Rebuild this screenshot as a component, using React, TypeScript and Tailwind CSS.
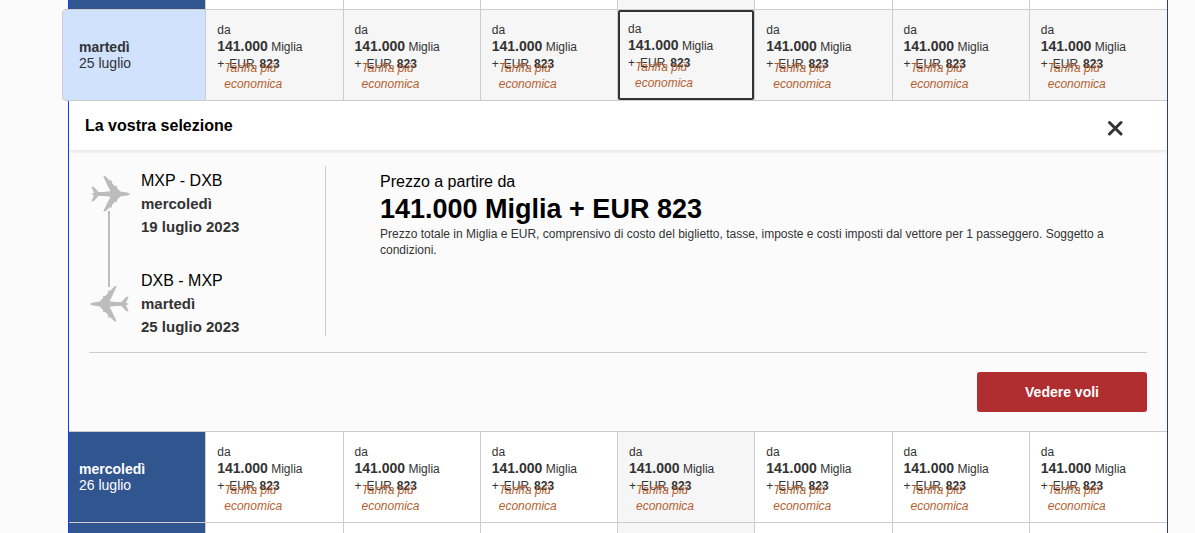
import { useState } from 'react';
import clsx from 'clsx';

interface Leg {
    route: string;
    weekday: string;
    date: string;
}

const columns = [0, 1, 2, 3, 4, 5, 6];
const activeColumn = 3;

const legs: Leg[] = [
    { route: 'MXP - DXB', weekday: 'mercoledì', date: '19 luglio 2023' },
    { route: 'DXB - MXP', weekday: 'martedì', date: '25 luglio 2023' },
];

function Plane({ className }: { className?: string }) {
    return (
        <svg viewBox="1 0 40 40" className={clsx('h-10 w-10 fill-[#bcbcbc]', className)} aria-hidden="true">
            <path d="M2.3 12.5 L5 13 L9.5 18 L15 18 L21.5 17.2 L18.5 11.5 L14.2 2 L16.5 2.2 L20.5 6.6 L22.8 6.6 L23 9 L25.6 12 L27.8 11.8 L28 14.2 L31.4 17.6 L38 18.4 Q40.6 19 41 20 Q40.6 21 38 21.6 L31.4 22.4 L28 25.8 L27.8 28.2 L25.6 28 L23 31 L22.8 33.4 L20.5 33.4 L16.5 37.3 L14.2 37.6 L18.5 28.5 L21.5 22.8 L15 22 L9.5 22 L5 27 L2.3 27.5 L5 21 L2.8 20.4 L2.8 19.6 L5 19 Z" />
        </svg>
    );
}

function Fare({ selected = false }: { selected?: boolean }) {
    return (
        <button
            type="button"
            aria-pressed={selected}
            className={clsx(
                'flex h-[90px] w-full flex-col text-left text-xs leading-4 text-[#333]',
                selected ? 'rounded-xs border-2 border-[#333] px-2 pt-[9px]' : 'px-[11px] pt-3'
            )}
        >
            <span className="block">da</span>
            <span className="block leading-[17px]">
                <b className="text-sm leading-[17px]">141.000</b> Miglia
            </span>
            <span className="flex gap-[5px]">
                <span>+</span>
                <span>EUR</span>
                <b>823</b>
            </span>
            <i className="-mt-3 block w-20 pl-[7px] text-[#b55f2f]">Tariffa più economica</i>
        </button>
    );
}

function FareRow({ weekday, date }: { weekday: string; date: string }) {
    return (
        <tr>
            <th scope="row" className="border-r border-b border-[#ccc] bg-[#31558f] pl-[10px] text-left text-sm leading-4 font-normal text-white">
                <b className="block">{weekday}</b>
                {date}
            </th>
            {columns.map((col) => (
                <td
                    key={col}
                    className={clsx('border-b border-[#ccc] p-0 not-last:border-r', col === activeColumn ? 'bg-[#f6f6f6]' : 'bg-white')}
                >
                    <Fare />
                </td>
            ))}
        </tr>
    );
}

function CutRow({ last = false }: { last?: boolean }) {
    return (
        <tr className={last ? 'h-[10px]' : 'h-[10px] *:border-b'}>
            <td className="border-r border-[#ccc] bg-[#31558f] p-0" />
            {columns.map((col) => (
                <td
                    key={col}
                    className={clsx('border-[#ccc] p-0 not-last:border-r', col === activeColumn ? 'bg-[#f6f6f6]' : 'bg-white')}
                />
            ))}
        </tr>
    );
}

function Selection({ onClose }: { onClose: () => void }) {
    return (
        <section className="overflow-hidden bg-[#fbfbfb]">
            <header className="flex h-[49px] items-center justify-between bg-white pr-11 pl-4 shadow-[0_2px_3px_#e9e9e9]">
                <h2 className="text-base font-bold text-black">La vostra selezione</h2>
                <button type="button" aria-label="Chiudi" onClick={onClose} className="mt-1">
                    <svg viewBox="0 0 16 16" className="h-4 w-4 stroke-[#333] stroke-3" strokeLinecap="round">
                        <path d="M2.5 2.5 L14 14 M14 2.5 L2.5 14" />
                    </svg>
                </button>
            </header>
            <div className="mx-5 flex border-b border-[#ccc] py-4">
                <div className="flex h-[170px] w-[237px] shrink-0 border-r border-[#ccc]">
                    <div className="flex w-[52px] flex-col pt-2 pb-3 pl-px">
                        <Plane />
                        <div className="-my-[3px] ml-[18px] w-[2px] flex-1 bg-[#bcbcbc]" />
                        <Plane className="-scale-x-100" />
                    </div>
                    <div className="flex flex-col gap-[31px] pt-[3px]">
                        {legs.map((leg) => (
                            <div key={leg.route} className="text-[15px] leading-[23px] font-bold text-[#333]">
                                <div className="text-base leading-[23px] font-normal text-black">{leg.route}</div>
                                <div>{leg.weekday}</div>
                                <div>{leg.date}</div>
                            </div>
                        ))}
                    </div>
                </div>
                <div className="pt-1 pl-[54px]">
                    <p className="text-base leading-6 text-black">Prezzo a partire da</p>
                    <p className="mb-0.5 text-[27px] leading-[30px] font-bold text-black">141.000 Miglia + EUR 823</p>
                    <p className="text-xs leading-4 text-[#333]">
                        Prezzo totale in Miglia e EUR, comprensivo di costo del biglietto, tasse, imposte e costi imposti dal vettore per 1 passeggero. Soggetto a condizioni.
                    </p>
                </div>
            </div>
            <div className="flex justify-end px-5 py-[19px]">
                <button type="button" className="h-10 w-[170px] rounded-[3px] bg-[#b02e30] text-sm font-bold text-white">
                    Vedere voli
                </button>
            </div>
        </section>
    );
}

export default function App() {
    const [open, setOpen] = useState(true);

    return (
        <main className="min-h-screen bg-[#fbfbfb] pr-[27px] pl-[68px] font-['Liberation_Sans',Arial,sans-serif]">
            <div className="border-r border-l border-r-[#1f37c4] border-l-[#1538f5]">
                <table className="w-full table-fixed border-separate border-spacing-0">
                    <tbody>
                        <CutRow />
                        <tr>
                            <th scope="row" className="p-0 text-left text-sm leading-4 font-normal text-[#333]">
                                <div className="-mt-px -ml-[7px] flex h-[92px] flex-col justify-center rounded-l-sm border border-[#ccc] bg-[#d0e2fe] pl-[16px]">
                                    <b>martedì</b>
                                    25 luglio
                                </div>
                            </th>
                            {columns.map((col) => (
                                <td key={col} className="border-b border-[#ccc] bg-[#f6f6f6] p-0 not-last:border-r">
                                    <Fare selected={col === activeColumn} />
                                </td>
                            ))}
                        </tr>
                        {open && (
                            <tr>
                                <td colSpan={8} className="border-b border-[#ccc] p-0">
                                    <Selection onClose={() => setOpen(false)} />
                                </td>
                            </tr>
                        )}
                        <FareRow weekday="mercoledì" date="26 luglio" />
                        <CutRow last />
                    </tbody>
                </table>
            </div>
        </main>
    );
}
